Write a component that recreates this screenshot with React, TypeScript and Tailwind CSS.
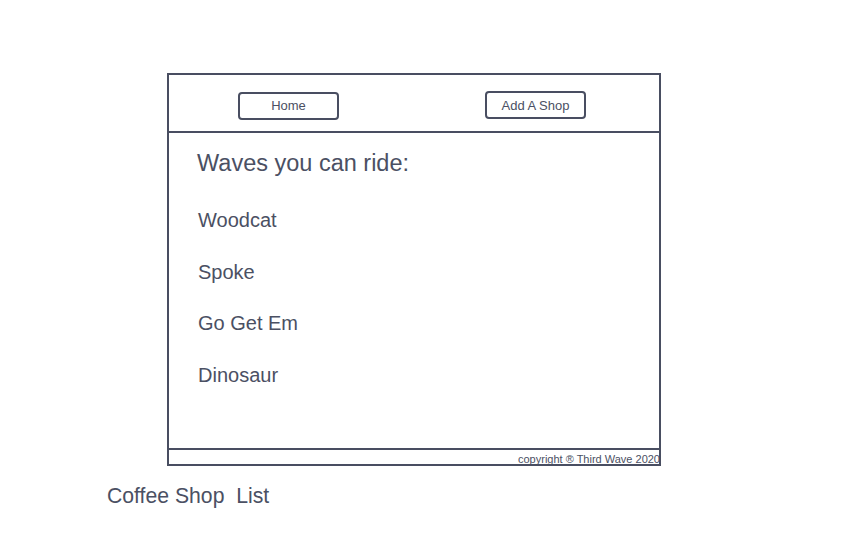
import React from "react";

const shops = ["Woodcat", "Spoke", "Go Get Em", "Dinosaur"];

function NavButton({ label, className }: { label: string; className?: string }) {
    return (
        <div
            className={
                "flex h-[28px] w-[101px] items-center justify-center rounded-[4px] border-2 border-[#494e61] pt-[1px] text-[13px] text-[#4b5063] " +
                (className ?? "")
            }
        >
            {label}
        </div>
    );
}

export default function App() {
    return (
        <div className="min-h-screen bg-white font-['Liberation_Sans',Arial,sans-serif] text-[#4b5063]">
            <div className="pt-[73px] pl-[167px]">
                <div className="flex h-[393px] w-[494px] flex-col border-2 border-[#494e61]">
                    <header className="flex h-[56px] shrink-0 items-center pl-[69px] pt-[4px]">
                        <NavButton label="Home" className="mt-[1px]" />
                        <NavButton label="Add A Shop" className="ml-[146px]" />
                    </header>
                    <main className="flex-1 border-y-2 border-[#494e61] pl-[28px] pt-[16px]">
                        <h1 className="text-[23.5px] leading-[28px]">Waves you can ride:</h1>
                        <ul className="mt-[31px] ml-[1px] flex flex-col gap-[27.5px] text-[20px] leading-[24px]">
                            {shops.map((s) => (
                                <li key={s}>{s}</li>
                            ))}
                        </ul>
                    </main>
                    <footer className="flex h-[14px] shrink-0 justify-end overflow-hidden text-[11px] leading-[19px] whitespace-nowrap">
                        <span className="-mr-[1px]">copyright ® Third Wave 2020</span>
                    </footer>
                </div>
            </div>
            <p className="mt-[18px] ml-[107px] whitespace-pre text-[21.2px] leading-[24px]">Coffee Shop  List</p>
        </div>
    );
}
